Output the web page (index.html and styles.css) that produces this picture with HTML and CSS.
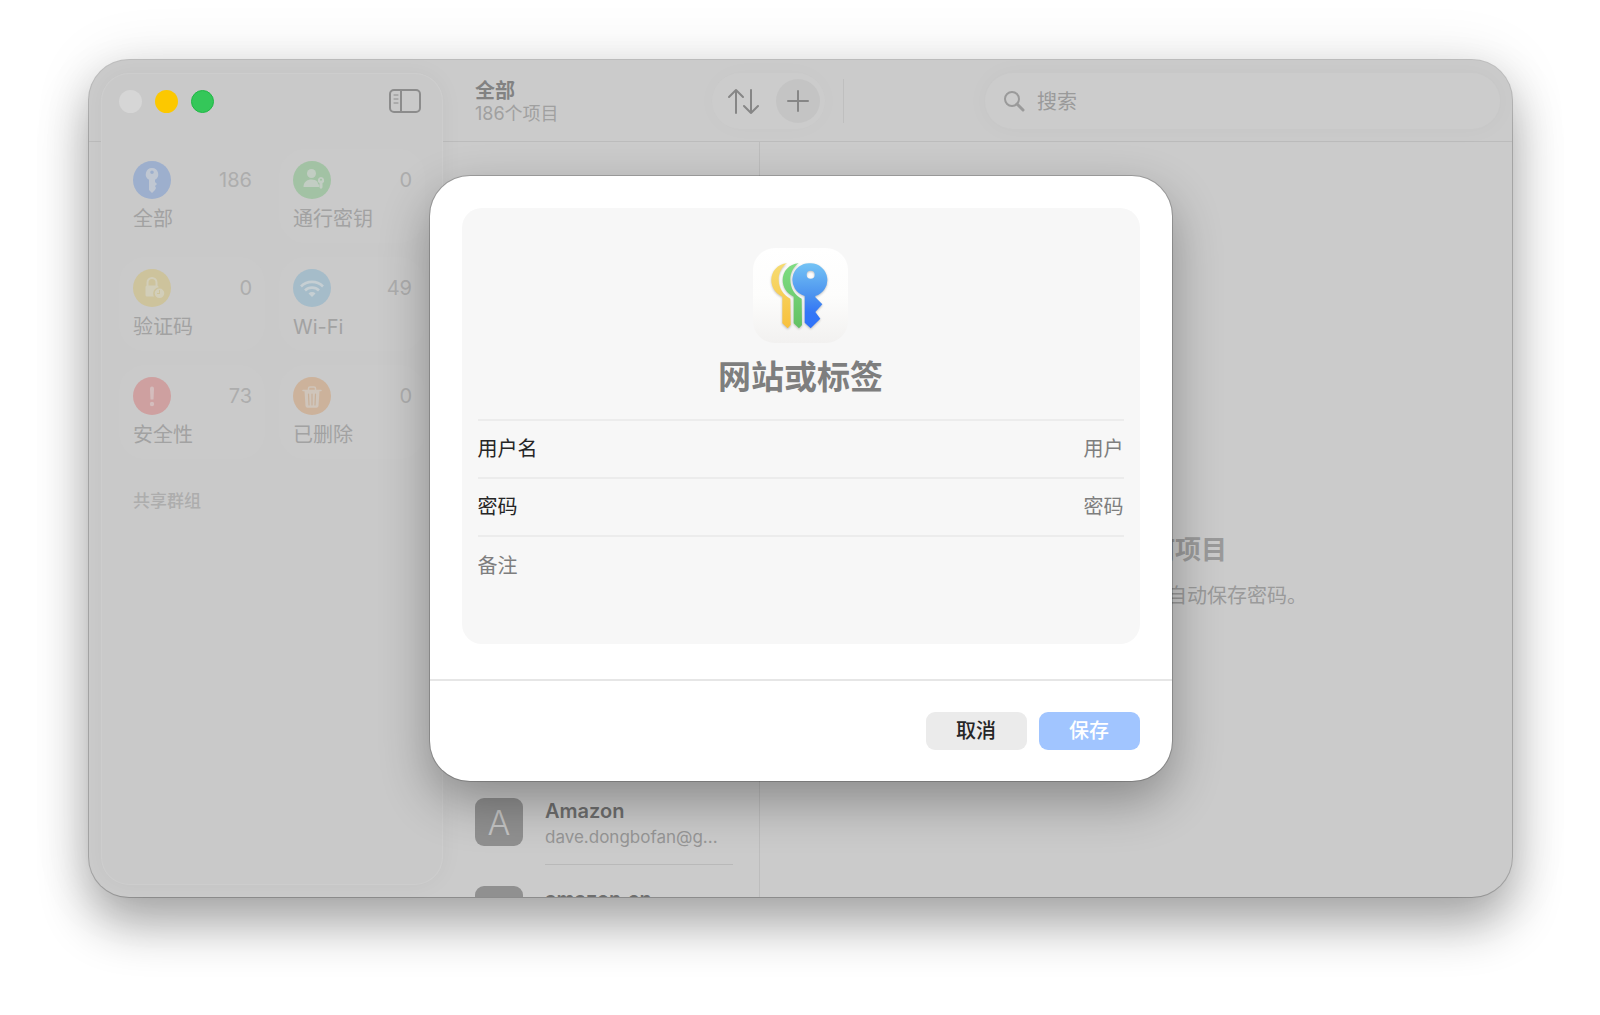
FILE: index.html
```html
<!DOCTYPE html>
<html lang="zh-CN">
<head>
    <meta charset="UTF-8">
    <meta name="viewport" content="width=device-width, initial-scale=1.0">
    <title>密码</title>
    <link rel="stylesheet" href="styles.css">
</head>
<body>
    <div class="window">

        <!-- Sidebar -->
        <aside class="sidebar">
            <div class="sidebar-top">
                <div class="lights">
                    <button class="light light-close" aria-label="关闭"></button>
                    <button class="light light-min" aria-label="最小化"></button>
                    <button class="light light-max" aria-label="缩放"></button>
                </div>
                <button class="icon-button" aria-label="边栏">
                    <svg width="32" height="26" viewBox="0 0 32 26" fill="none" stroke="currentColor" stroke-width="2" stroke-linecap="round">
                        <rect x="1" y="2" width="30" height="22" rx="4"/>
                        <path d="M12 2v22"/>
                        <path d="M5 7h4M5 11h4M5 15h4" stroke-width="1"/>
                    </svg>
                </button>
            </div>

            <nav class="tiles">
                <a href="#" class="tile tile-active">
                    <span class="badge badge-blue">
                        <svg width="38" height="38" viewBox="0 0 38 38" fill="currentColor">
                            <path fill-rule="evenodd" d="M19 7a6.300 6.300 0 0 1 3 11.800V21l2 2-2 2 1 2-1 2-3 3-3-3V18.800A6.300 6.300 0 0 1 19 7zm0 2.500a1.800 1.800 0 1 0 0 3.600 1.800 1.800 0 0 0 0-3.600z"/>
                        </svg>
                    </span>
                    <span class="count">186</span>
                    <span class="tile-name">全部</span>
                </a>
                <a href="#" class="tile">
                    <span class="badge badge-green">
                        <svg width="38" height="38" viewBox="0 0 38 38" fill="currentColor">
                            <circle cx="18.500" cy="12.500" r="4.500"/>
                            <path d="M10.500 26c0-5 3.500-7.500 8-7.500 2.500 0 4.500.8 6 2.300.2 1.500.9 2.600 1.800 3.200v2z"/>
                            <path fill-rule="evenodd" d="M28 16a3.300 3.300 0 0 1 1.500 6.200v4.300L28 28l-1.500-1.500v-4.300A3.300 3.300 0 0 1 28 16zm0 1.700a1 1 0 1 0 0 2 1 1 0 0 0 0-2z"/>
                        </svg>
                    </span>
                    <span class="count">0</span>
                    <span class="tile-name">通行密钥</span>
                </a>
                <a href="#" class="tile">
                    <span class="badge badge-yellow">
                        <svg width="38" height="38" viewBox="0 0 38 38" fill="currentColor">
                            <path d="M14.500 17v-3.500a4.500 4.500 0 0 1 9 0V17" fill="none" stroke="currentColor" stroke-width="2"/>
                            <path d="M14 16.500h10a1.500 1.500 0 0 1 1.500 1.500v.5a6 6 0 0 0-4.500 9H14a1.500 1.500 0 0 1-1.500-1.500v-8a1.500 1.500 0 0 1 1.500-1.500z"/>
                            <path fill-rule="evenodd" d="M26.500 19.500a4.800 4.800 0 1 1 0 9.600 4.800 4.800 0 0 1 0-9.600zM26 21v3h-2v1h3v-4z"/>
                        </svg>
                    </span>
                    <span class="count">0</span>
                    <span class="tile-name">验证码</span>
                </a>
                <a href="#" class="tile">
                    <span class="badge badge-cyan">
                        <svg width="38" height="38" viewBox="0 0 38 38" fill="none" stroke="currentColor" stroke-width="2.600">
                            <path d="M8 17.500a15.500 15.500 0 0 1 22 0"/>
                            <path d="M12 21.500a10 10 0 0 1 14 0"/>
                            <path d="M19 28l-3.500-3.500a5 5 0 0 1 7 0z" fill="currentColor" stroke="none"/>
                        </svg>
                    </span>
                    <span class="count">49</span>
                    <span class="tile-name">Wi-Fi</span>
                </a>
                <a href="#" class="tile">
                    <span class="badge badge-red">
                        <svg width="38" height="38" viewBox="0 0 38 38" fill="currentColor">
                            <path d="M17 11.500a2 2 0 0 1 4 0l-.5 11h-3z"/>
                            <circle cx="19" cy="27" r="2.200"/>
                        </svg>
                    </span>
                    <span class="count">73</span>
                    <span class="tile-name">安全性</span>
                </a>
                <a href="#" class="tile">
                    <span class="badge badge-orange">
                        <svg width="38" height="38" viewBox="0 0 38 38">
                            <path d="M15.500 13v-1.500a1.500 1.500 0 0 1 1.500-1.500h4a1.500 1.500 0 0 1 1.500 1.500V13M10 13.500h18" fill="none" stroke="currentColor" stroke-width="1.500" stroke-linecap="round"/>
                            <path d="M11.500 14h15l-1 15a2 2 0 0 1-2 1.800h-9a2 2 0 0 1-2-1.800z" fill="currentColor"/>
                            <path d="M15.500 17l.5 11M19 17v11M22.500 17l-.5 11" stroke="#c8b09a" stroke-width="1.200" stroke-linecap="round"/>
                        </svg>
                    </span>
                    <span class="count">0</span>
                    <span class="tile-name">已删除</span>
                </a>
            </nav>

            <h2 class="group-title">共享群组</h2>
        </aside>

        <!-- Toolbar and content -->
        <main class="main">
            <header class="toolbar">
                <div class="heading">
                    <h1>全部</h1>
                    <p>186个项目</p>
                </div>
                <div class="actions">
                    <button class="action" aria-label="排序">
                        <svg width="32" height="32" viewBox="0 0 32 32" fill="none" stroke="currentColor" stroke-width="2" stroke-linecap="round" stroke-linejoin="round">
                            <path d="M9 28V5M2 12l7-7 7 7"/>
                            <path d="M24 5v23M17 21l7 7 7-7"/>
                        </svg>
                    </button>
                    <button class="action action-add" aria-label="添加">
                        <svg width="22" height="22" viewBox="0 0 22 22" fill="none" stroke="currentColor" stroke-width="2" stroke-linecap="round">
                            <path d="M11 1v20M1 11h20"/>
                        </svg>
                    </button>
                </div>
                <label class="search">
                    <svg width="22" height="22" viewBox="0 0 22 22" fill="none" stroke="currentColor" stroke-width="2" stroke-linecap="round">
                        <circle cx="9" cy="9" r="7"/>
                        <path d="M14 14l6 6" stroke-width="3"/>
                    </svg>
                    <input type="search" placeholder="搜索" aria-label="搜索">
                </label>
            </header>

            <div class="panes">
                <ul class="list">
                    <li class="item">
                        <span class="avatar">A</span>
                        <div class="item-text">
                            <h3>Amazon</h3>
                            <p>dave.dongbofan@g...</p>
                        </div>
                    </li>
                    <li class="item">
                        <span class="avatar">A</span>
                        <div class="item-text">
                            <h3>amazon.cn</h3>
                        </div>
                    </li>
                </ul>
                <section class="detail">
                    <h2>未选择任何项目</h2>
                    <p>自动保存密码。</p>
                </section>
            </div>
        </main>

        <!-- New password sheet -->
        <div class="backdrop">
            <form class="sheet" role="dialog" aria-label="新密码">
                <div class="card">
                    <svg class="app-icon" viewBox="0 0 285 285">
                        <defs>
                            <linearGradient id="paper" x1="0" y1="0" x2="0" y2="1">
                                <stop offset="0" stop-color="#ffffff"/>
                                <stop offset="0.500" stop-color="#fdfdfc"/>
                                <stop offset="1" stop-color="#f2f1f0"/>
                            </linearGradient>
                            <linearGradient id="blue" x1="0" y1="0" x2="0" y2="1">
                                <stop offset="0" stop-color="#74c3f5"/>
                                <stop offset="0.500" stop-color="#4b92ef"/>
                                <stop offset="0.750" stop-color="#3377f6"/>
                                <stop offset="1" stop-color="#2f72fa"/>
                            </linearGradient>
                            <linearGradient id="green" x1="0" y1="0" x2="0" y2="1">
                                <stop offset="0" stop-color="#7fdd83"/>
                                <stop offset="1" stop-color="#62c163"/>
                            </linearGradient>
                            <linearGradient id="yellow" x1="0" y1="0" x2="0" y2="1">
                                <stop offset="0" stop-color="#f6dc72"/>
                                <stop offset="1" stop-color="#f8c03c"/>
                            </linearGradient>
                        </defs>
                        <rect width="285" height="285" rx="66" fill="url(#paper)"/>
                        <g class="keys">
                            <path fill="url(#yellow)" d="M102 46C74 48 55 70 55 97c0 21 13 40 33 49v80l16 15 9-10-1-79C92 143 77 122 77 94c0-20 10-38 25-48z"/>
                            <path fill="url(#green)" d="M137 46C108 48 89 70 89 97c0 21 13 40 33 49v80l16 15 9-10-1-79C126 143 112 122 112 94c0-20 10-38 25-48z"/>
                            <path fill="url(#blue)" fill-rule="evenodd" d="M173 46a50 50 0 0 1 14 98v4l21 21-21 23 15 20-29 29-18-17v-80a50 50 0 0 1 18-98zm0 22a12 12 0 1 0 0 24 12 12 0 0 0 0-24z"/>
                        </g>
                    </svg>
                    <input class="title-input" type="text" placeholder="网站或标签" aria-label="网站或标签">
                    <div class="field">
                        <label for="username">用户名</label>
                        <input id="username" type="text" placeholder="用户">
                    </div>
                    <div class="field">
                        <label for="password">密码</label>
                        <input id="password" type="text" placeholder="密码">
                    </div>
                    <textarea class="notes" placeholder="备注" aria-label="备注"></textarea>
                </div>
                <footer class="sheet-footer">
                    <button type="button" class="btn">取消</button>
                    <button type="submit" class="btn btn-primary">保存</button>
                </footer>
            </form>
        </div>
    </div>
</body>
</html>
```
FILE: styles.css
```css
* {
    box-sizing: border-box;
}

body {
    margin: 0;
    padding: 60px 88px 118px 89px;
    min-height: 100vh;
    display: flex;
    background: #fff;
    font-family: Inter, "Noto Sans CJK SC", sans-serif;
    font-size: 20px;
    line-height: 28px;
    color: #868686;
}

h1, h2, h3, p, ul {
    margin: 0;
    padding: 0;
}

button, input, textarea {
    font: inherit;
    color: inherit;
    border: none;
    background: none;
    padding: 0;
    outline: none;
}

svg {
    display: block;
    flex: none;
}

.window {
    position: relative;
    flex: 1;
    display: flex;
    border-radius: 40px;
    background: #cbcbcb linear-gradient(#bcbcbc, #bcbcbc) 0 81px / 100% 1px no-repeat;
    box-shadow: 0 0 0 1px rgba(0, 0, 0, 0.2), 0 28px 50px rgba(0, 0, 0, 0.32), 0 0 60px rgba(0, 0, 0, 0.1);
}

/* Sidebar */
.sidebar {
    width: 342px;
    margin: 13px 0 12px 12px;
    border-radius: 28px;
    background: #c9c9c9;
    box-shadow: inset 0 0 1px 1px rgba(255, 255, 255, 0.1), 0 0 24px rgba(0, 0, 0, 0.04);
}

.sidebar-top {
    display: flex;
    align-items: center;
    justify-content: space-between;
    height: 56px;
    padding: 0 22px 0 18px;
}

.lights {
    display: flex;
    gap: 13px;
}

.light {
    width: 23px;
    height: 23px;
    border-radius: 50%;
}

.light-close {
    background: #d6d6d6;
}

.light-min {
    background: #fcc800;
}

.light-max {
    background: #34c759;
    border: 1px solid #1fb845;
}

.tiles {
    display: grid;
    grid-template-columns: 1fr 1fr;
    gap: 14px;
    padding: 20px 18px 0;
}

.tile {
    display: grid;
    grid-template-columns: auto 1fr;
    align-content: start;
    row-gap: 6px;
    height: 94px;
    padding: 12px 13px 0 14px;
    border-radius: 26px;
    background: #cacaca;
    color: #a2a2a2;
    text-decoration: none;
}

.tile-active {
    background: none;
}

.badge {
    width: 38px;
    height: 38px;
    border-radius: 50%;
}

.badge-blue {
    background: #9dafcd;
    color: #c0c7d2;
}

.badge-green {
    background: #a2c2a4;
    color: #c2cdc3;
}

.badge-yellow {
    background: #cdc39c;
    color: #d2ceb9;
}

.badge-cyan {
    background: #a5bcc9;
    color: #c6cfd3;
}

.badge-red {
    background: #cea0a0;
    color: #d4bdbd;
}

.badge-orange {
    background: #ccb29b;
    color: #cfc5bb;
}

.count {
    align-self: center;
    text-align: right;
    color: #adadad;
}

.tile-name {
    grid-column: 1 / -1;
}

.group-title {
    margin: 28px 32px 0;
    font-size: 17px;
    font-weight: 500;
    color: #adadad;
}

/* Toolbar */
.icon-button {
    color: #8c8c8c;
}

.main {
    flex: 1;
    min-width: 0;
    display: flex;
    flex-direction: column;
    overflow: hidden;
    border-radius: 0 40px 40px 0;
}

.toolbar {
    display: flex;
    align-items: center;
    height: 82px;
    padding: 0 12px 0 32px;
}

.heading {
    width: 237px;
    padding-top: 2px;
}

.heading h1 {
    font-size: 20px;
    line-height: 24px;
    font-weight: 700;
    color: #828282;
}

.heading p {
    font-size: 18px;
    line-height: 22px;
    color: #a0a0a0;
}

.actions {
    display: flex;
    align-items: center;
    gap: 17px;
    height: 56px;
    padding: 0 5px 0 15px;
    border-radius: 28px;
    background: #cccccc;
    box-shadow: 0 0 24px rgba(0, 0, 0, 0.02);
    color: #868686;
}

.action {
    display: grid;
    place-items: center;
}

.action-add {
    width: 44px;
    height: 44px;
    border-radius: 50%;
    background: #c4c4c4;
}

.toolbar::after {
    content: "";
    order: 1;
    width: 1px;
    height: 44px;
    margin: 0 141px 0 18px;
    background: #bfbfbf;
}

.search {
    order: 2;
    flex: 1;
    display: flex;
    align-items: center;
    gap: 12px;
    height: 56px;
    padding: 0 18px;
    border-radius: 28px;
    background: #cccccc;
    box-shadow: 0 0 24px rgba(0, 0, 0, 0.03);
    color: #9a9a9a;
}

.search input {
    flex: 1;
    min-width: 0;
    padding-top: 2px;
}

::placeholder {
    color: inherit;
    opacity: 1;
}

/* Panes */
.panes {
    flex: 1;
    min-height: 0;
    display: flex;
}

.list {
    width: 317px;
    display: flex;
    flex-direction: column;
    justify-content: flex-end;
    margin-bottom: -65px;
    border-right: 1px solid #bdbdbd;
    list-style: none;
}

.item {
    display: flex;
    gap: 22px;
    height: 88px;
    padding: 12px 26px 0 32px;
}

.avatar {
    flex: none;
    width: 48px;
    height: 48px;
    border-radius: 9px;
    background: #909090;
    color: #c4c4c4;
    font-size: 34px;
    font-weight: 300;
    line-height: 50px;
    text-align: center;
}

.item-text {
    flex: 1;
    min-width: 0;
    height: 67px;
    border-bottom: 1px solid #b9b9b9;
}

.item h3 {
    font-size: 20px;
    line-height: 26px;
    font-weight: 600;
    color: #6e6e6e;
}

.item p {
    font-size: 17px;
    line-height: 26px;
    color: #969696;
    white-space: nowrap;
}

.detail {
    flex: 1;
    display: flex;
    flex-direction: column;
    align-items: center;
    justify-content: center;
    gap: 14px;
    padding-top: 102px;
    color: #9a9a9a;
}

.detail h2 {
    font-size: 26px;
    line-height: 36px;
    font-weight: 700;
}

.detail p {
    width: 342px;
    text-align: right;
}

/* Sheet */
.backdrop {
    position: absolute;
    inset: 0;
    display: grid;
    place-items: center;
}

.sheet {
    width: 100%;
    max-width: 742px;
    border-radius: 40px;
    background: #fff;
    box-shadow: 0 0 0 1px rgba(0, 0, 0, 0.2), 0 20px 50px rgba(0, 0, 0, 0.32);
}

.card {
    display: flex;
    flex-direction: column;
    margin: 32px 32px 35px;
    padding: 40px 16px 0;
    border-radius: 20px;
    background: #f7f7f7;
    color: #7e7e7e;
}

.app-icon {
    align-self: center;
    width: 95px;
    height: 95px;
}

.keys {
    filter: drop-shadow(0 3px 3px rgba(0, 0, 0, 0.25));
}

.title-input {
    height: 44px;
    margin: 12px 0 20px;
    font-size: 33px;
    font-weight: 700;
    text-align: center;
}

.field {
    display: flex;
    align-items: center;
    height: 58px;
    border-top: 2px solid #ececec;
}

.field label {
    color: #262626;
}

.field input {
    flex: 1;
    min-width: 0;
    text-align: right;
}

.notes {
    display: block;
    height: 109px;
    padding-top: 15px;
    border-top: 2px solid #ececec;
    resize: none;
}

.sheet-footer {
    display: flex;
    justify-content: flex-end;
    gap: 12px;
    padding: 31px 32px;
    border-top: 2px solid #e6e6e6;
}

.btn {
    width: 101px;
    height: 38px;
    border-radius: 9px;
    background: #ebebeb;
    color: #262626;
    font-weight: 500;
}

.btn-primary {
    background: #a1c5ff;
    color: #fff;
}
```
